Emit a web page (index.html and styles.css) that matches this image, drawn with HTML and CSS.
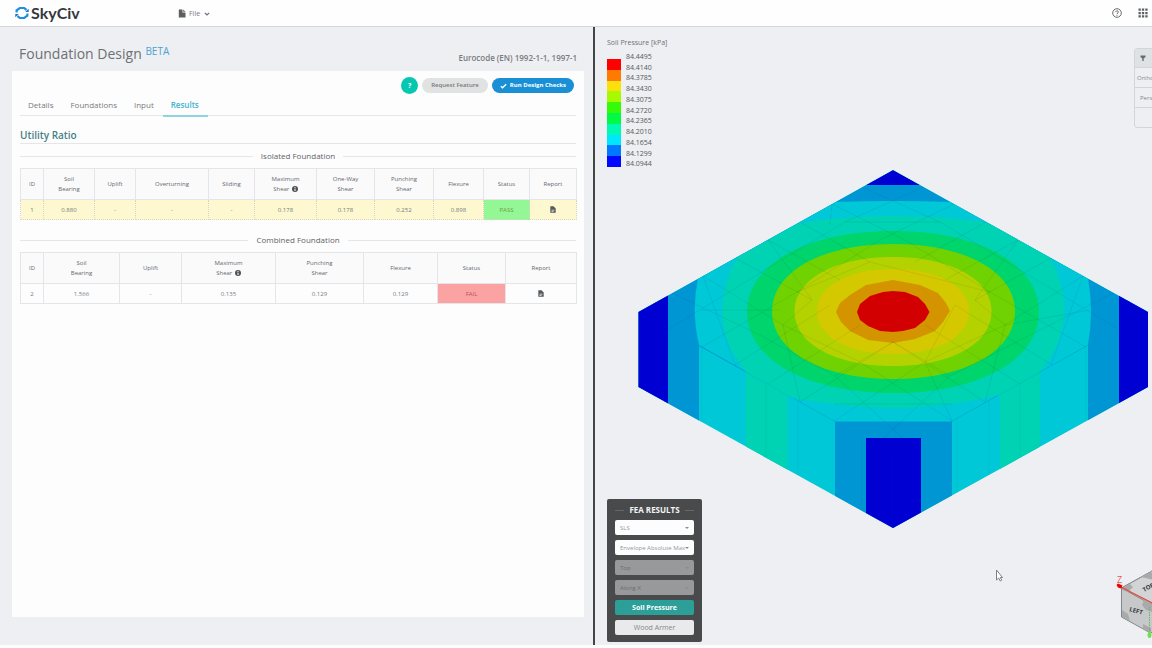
FILE: index.html
```html
<!DOCTYPE html>
<html lang="en">
<head>
<meta charset="utf-8">
<title>SkyCiv Foundation Design</title>
<link rel="stylesheet" href="styles.css">
</head>
<body>
<header class="topbar">
  <a class="brand" href="#">
    <svg class="brand-mark" viewBox="0 0 14 14" aria-hidden="true">
      <g fill="none" stroke-width="2.2">
        <path stroke="#1c8fe0" d="M1.600 6.600V4.400L4.800 2h4.400l2.400 1.800"/>
        <path stroke="#1c8fe0" d="M12.400 7.400v2.200L9.200 12H4.800L2.400 10.200"/>
      </g>
      <path fill="#1670c4" d="M10.200 6h3.500V2.800zM3.800 8H.3v3.200z"/>
    </svg>
    <span>SkyCiv</span>
  </a>
  <button class="file-menu" type="button">
    <svg class="icon-doc" viewBox="0 0 8 9" aria-hidden="true"><path d="M.8.5h3.700v3h3v5H.8zM5.200.5l2.300 2.300H5.200z"/></svg>
    <span>File</span>
    <svg class="icon-chevron" viewBox="0 0 6 4" aria-hidden="true"><path d="M.8.8 3 3 5.200.8"/></svg>
  </button>
  <div class="topbar-tools">
    <button type="button" class="tool" aria-label="Help">
      <svg viewBox="0 0 10 10" aria-hidden="true"><circle cx="5" cy="5" r="4.300" fill="none" stroke="#666b6e"/><path d="M3.700 4.100C3.700 2.300 6.400 2.400 6.400 4 6.400 5 5 5 5 6.100M5 6.900v.9" fill="none" stroke="#666b6e"/></svg>
    </button>
    <button type="button" class="tool" aria-label="Apps">
      <svg viewBox="0 0 10 10" aria-hidden="true"><path fill="#5b5f62" d="M.5.5h2.300v2.300H.5zM3.900.5h2.300v2.300H3.900zM7.300.5h2.300v2.300H7.300zM.5 3.900h2.300v2.300H.5zM3.900 3.900h2.300v2.300H3.900zM7.300 3.900h2.300v2.300H7.300zM.5 7.300h2.300v2.300H.5zM3.900 7.300h2.300v2.300H3.900zM7.300 7.300h2.300v2.300H7.300z"/></svg>
    </button>
  </div>
</header>

<main class="workspace">
  <section class="design">
    <div class="design-head">
      <h1>Foundation Design <sup>BETA</sup></h1>
      <span class="code">Eurocode (EN) 1992-1-1, 1997-1</span>
    </div>
    <div class="card">
      <div class="actions">
        <button type="button" class="btn-help">?</button>
        <button type="button" class="btn btn-grey">Request Feature</button>
        <button type="button" class="btn btn-blue">
          <svg viewBox="0 0 8 6" aria-hidden="true"><path d="M1 3.200 2.900 5 7 1"/></svg>
          <span>Run Design Checks</span>
        </button>
      </div>
      <nav class="tabs">
        <a href="#">Details</a>
        <a href="#">Foundations</a>
        <a href="#">Input</a>
        <a href="#" class="active">Results</a>
      </nav>
      <h2>Utility Ratio</h2>

      <h3 class="rule">Isolated Foundation</h3>
      <table class="ratios">
        <colgroup><col class="w23"><col class="w51"><col class="w41"><col class="w73"><col class="w46"><col class="w62"><col class="w58"><col class="w59"><col class="w50"><col class="w46"><col class="w47"></colgroup>
        <thead>
          <tr><th>ID</th><th>Soil<br>Bearing</th><th>Uplift</th><th>Overturning</th><th>Sliding</th><th>Maximum<br>Shear <svg class="info" viewBox="0 0 6 6" aria-hidden="true"><circle cx="3" cy="3" r="3"/><path d="M3 1v1M3 2.600V5"/></svg></th><th>One-Way<br>Shear</th><th>Punching<br>Shear</th><th>Flexure</th><th>Status</th><th>Report</th></tr>
        </thead>
        <tbody>
          <tr class="selected"><td>1</td><td>0.880</td><td>-</td><td>-</td><td>-</td><td>0.178</td><td>0.178</td><td>0.252</td><td>0.898</td><td class="pass">PASS</td><td><button type="button" class="report" aria-label="Report"><svg viewBox="0 0 6 7" aria-hidden="true"><path fill="#555a5d" d="M.3.300h3.200L5.700 2.500v4.200H.3z"/><path stroke="#fff" stroke-width=".7" d="M1.500 4.200h3M1.500 5.500h2"/></svg></button></td></tr>
        </tbody>
      </table>

      <h3 class="rule">Combined Foundation</h3>
      <table class="ratios">
        <colgroup><col class="w23"><col class="w76"><col class="w62"><col class="w94"><col class="w88"><col class="w74"><col class="w68"><col class="w71"></colgroup>
        <thead>
          <tr><th>ID</th><th>Soil<br>Bearing</th><th>Uplift</th><th>Maximum<br>Shear <svg class="info" viewBox="0 0 6 6" aria-hidden="true"><circle cx="3" cy="3" r="3"/><path d="M3 1v1M3 2.600V5"/></svg></th><th>Punching<br>Shear</th><th>Flexure</th><th>Status</th><th>Report</th></tr>
        </thead>
        <tbody>
          <tr><td>2</td><td>1.566</td><td>-</td><td>0.135</td><td>0.129</td><td>0.129</td><td class="fail">FAIL</td><td><button type="button" class="report" aria-label="Report"><svg viewBox="0 0 6 7" aria-hidden="true"><path fill="#555a5d" d="M.3.300h3.200L5.700 2.500v4.200H.3z"/><path stroke="#fff" stroke-width=".7" d="M1.500 4.200h3M1.500 5.500h2"/></svg></button></td></tr>
        </tbody>
      </table>
    </div>
  </section>

  <section class="viewer">
    <svg class="model" viewBox="595 27 557 618" role="img" aria-label="Soil pressure contour">
      <defs>
        <clipPath id="top-face"><path d="M893 170 1148 312 893 454 638 312z"/></clipPath>
        <clipPath id="body"><path d="M893 170 1148 312V387L893 528 638.500 387V312z"/></clipPath>
        <path id="ring" d="M-1 0C-1-.59-.59-1 0-1S1-.59 1 0 .59 1 0 1-1 .59-1 0Z"/>
      </defs>
      <g clip-path="url(#body)">
        <path fill="#00c8d6" d="M638 170h510v360H638z"/>
        <path fill="#00d2b4" d="M746 360h41.500v160H746zM1000 360h40v160h-40z"/>
        <path fill="#0096d4" d="M638 300h61v140h-61zM1088 300h60v140h-60zM835 421h117v110H835z"/>
        <g clip-path="url(#top-face)">
          <path fill="#0096d4" d="M638 170h510v284H638z"/>
          <path fill="#00c8d6" d="M835 202Q893 200 952 202L1088 278Q1094 312 1088 345L951 421.500H835L699 345Q691 312 698 278z"/>
          <path fill="#00d2b4" d="M798 224Q838 216 893 216T988 223L1050 257Q1066 290 1064 312 1063 345 1040 372L1000 395Q940 408 893 408 840 407 787.500 397L746 372Q723 345 722 312 723 280 738 257z"/>
          <path fill="#0000d2" d="M830 165h126v20H830zM866 438h55v20h-55z"/>
        </g>
        <path fill="#0000d2" d="M638 290h30v130h-30zM1119 290h30v130h-30zM866 438h55v95h-55z"/>
        <use href="#ring" fill="#00d46c" transform="translate(893 312) scale(146 81)"/>
        <use href="#ring" fill="#70d200" transform="translate(893.500 311.500) scale(121.500 67.500)"/>
        <use href="#ring" fill="#b4d200" transform="translate(893 311.500) scale(98.500 54.500)"/>
        <use href="#ring" fill="#d4c800" transform="translate(893 311.500) scale(76 42.500)"/>
        <path fill="#d49400" d="M836 312 840 303 850 295 866 285 893 280 920 285 938 293 946 303 950 311 943 322 935 331 915 339 893 343 868 340 850 331 841 322z"/>
        <path fill="#d20000" d="M857 312 860 304 870 296 883 292 893 291 905 292 918 297 925 304 929.500 312 925 320 915 328 903 331 893 332 880 331 868 326 860 320z"/>
        <g class="mesh" clip-path="url(#top-face)">
          <path d="M672 293 760 335 835 376 910 445M703 276 783 325 860 362 952 421M735 258 812 300M893 342 985 402M768 240 840 280M925 325 1020 384M800 222 870 262M955 305 1052 365M832 204 905 240 990 292 1086 347M862 187 940 222 1020 270 1120 330"/>
          <path d="M1114 293 1030 335 950 376 876 445M1083 276 1005 325 925 362 834 421M1051 258 975 300M893 342 800 402M1018 240 945 280M860 325 768 384M986 222 915 262M830 305 735 365M954 204 880 240 797 292 702 347M924 187 845 222 765 270 667 330"/>
          <path d="M703 276 735 365M768 240 812 300 783 325 800 402M832 204 830 225M797 292 870 262 990 292M835 376 893 342 950 376M955 305 925 362 952 421M1018 240 975 300 1005 325 985 402M1083 276 1051 365M700 310H780M1005 325 1090 310M845 222 940 222M834 404H952"/>
        </g>
        <path class="side-mesh" d="M702 347v76M766 383v75M798 401v75M862 437v74M893 454v74M957 418v75M989 400v75M1020 383v74M1086 347v74"/>
      </g>
      <path fill="#fff" stroke="#7d8083" d="M996.500 570v10l2.200-2 1.500 3 1.500-.800-1.400-2.700h2.200z"/>
      <g>
        <path fill="#c7c8ca" stroke="#85888a" d="M1121.500 588v29l29 16 4-2v-62l-5 3.500z"/>
        <path fill="#d3d4d5" stroke="#85888a" d="M1121.500 588l28-15.500 6 3v29l-6-1z"/>
        <path fill="#a8aaab" d="M1122 588l8-4 3 3-5 5-6-2zM1122 610l6 4 2 7-8-4zM1144 600l9 4v8l-7-2-4-5zM1143 624l8 4v5l-8-4zM1141 577l8-4h5v7z"/>
        <path stroke="#de4939" stroke-width="1.400" d="M1120 586.500 1152 603"/>
        <path fill="#e00" d="M1116.500 585l1.500-1.500 4.500 2-1.500 3-3-1z"/>
        <path stroke="#65bd58" stroke-dasharray="1.500 1" d="M1149.500 607v24"/>
        <ellipse cx="1149.500" cy="635" rx="2" ry="3" fill="#6ee052"/>
        <text class="axis" x="1117" y="583">Z</text>
        <text class="face" transform="translate(1129 611) rotate(16)">LEFT</text>
        <text class="face" transform="translate(1144 592) rotate(-28)">TOP</text>
      </g>
    </svg>

    <div class="legend">
      <p>Soil Pressure [kPa]</p>
      <div class="legend-body">
        <div class="scale"><i class="c1"></i><i class="c2"></i><i class="c3"></i><i class="c4"></i><i class="c5"></i><i class="c6"></i><i class="c7"></i><i class="c8"></i><i class="c9"></i><i class="c10"></i></div>
        <ul>
          <li>84.4495</li><li>84.4140</li><li>84.3785</li><li>84.3430</li><li>84.3075</li><li>84.2720</li><li>84.2365</li><li>84.2010</li><li>84.1654</li><li>84.1299</li><li>84.0944</li>
        </ul>
      </div>
    </div>

    <div class="view-menu">
      <button type="button" class="view-head" aria-label="Collapse"><svg viewBox="0 0 6 6" aria-hidden="true"><path fill="#666b6e" d="M.5.500h5v1.500L3.700 3.500V6H2.300V3.500L.5 2z"/></svg></button>
      <button type="button">Ortho</button>
      <button type="button" class="indent">Persp</button>
      <button type="button" aria-label="More"></button>
    </div>

    <form class="fea">
      <h4 class="rule">FEA RESULTS</h4>
      <div class="pick"><select aria-label="Limit state"><option>SLS</option></select></div>
      <div class="pick"><select aria-label="Load case"><option>Envelope Absolute Max</option></select></div>
      <div class="pick off"><select aria-label="Surface" disabled><option>Top</option></select></div>
      <div class="pick off"><select aria-label="Direction" disabled><option>Along X</option></select></div>
      <button type="button" class="teal">Soil Pressure</button>
      <button type="button">Wood Armer</button>
    </form>
  </section>
</main>
</body>
</html>
```

FILE: styles.css
```css
* { box-sizing: border-box; }

body {
  margin: 0;
  height: 100vh;
  padding-bottom: 3px;
  display: flex;
  flex-direction: column;
  background: #fdfdfd;
  color: #777b7e;
  font: 7px/10px "Open Sans", "Noto Sans", sans-serif;
  overflow: hidden;
}

button, select { font: inherit; color: inherit; border: 0; margin: 0; padding: 0; background: none; }
a { color: inherit; text-decoration: none; }
h1, h2, h3, h4, p, ul { margin: 0; padding: 0; font-weight: 400; list-style: none; }
svg { display: block; }

.topbar {
  flex: none;
  height: 27px;
  display: flex;
  align-items: center;
  padding: 0 4px 0 15px;
  background: #fefefe;
  border-bottom: 1px solid #d5d7d9;
}
.brand { display: flex; align-items: center; gap: 2px; width: 163px; color: #35383b; font: 700 16px/20px Lato, sans-serif; }
.brand-mark { width: 14px; height: 14px; }
.file-menu { display: flex; align-items: center; gap: 3px; font-size: 7px; line-height: 12px; padding-top: 1px; }
.icon-doc { width: 8px; height: 9px; fill: #5b5f62; }
.icon-chevron { width: 6px; height: 4px; margin-left: 1px; fill: none; stroke: #6b6f72; stroke-width: 1.2; }
.topbar-tools { margin-left: auto; display: flex; gap: 16px; }
.tool svg { width: 10px; height: 10px; }

.workspace {
  flex: 1;
  min-height: 0;
  display: grid;
  grid-template-columns: minmax(0, 595fr) minmax(0, 557fr);
  grid-template-rows: minmax(0, 1fr);
  background: #eeeff2;
}

.design {
  display: flex;
  flex-direction: column;
  padding: 0 9px 28px 12px;
  border-right: 2px solid #434547;
}
.design-head { height: 44px; padding: 0 7px; display: flex; justify-content: space-between; }
h1 { padding-top: 17px; font-size: 14px; line-height: 20px; font-weight: 500; color: #6c7173; }
h1 sup { font-size: 10px; line-height: 10px; vertical-align: 4px; color: #4aa3d3; }
.code { padding-top: 25px; font-size: 8px; line-height: 12px; font-weight: 600; }

.card { flex: 1; padding: 6px 8px; background: #fdfdfd; }
.actions { display: flex; justify-content: flex-end; align-items: center; gap: 4px; padding-right: 2px; height: 17px; }
.btn-help { width: 17px; height: 17px; border-radius: 50%; background: #06c8b0; color: #fff; font-weight: 700; }
.btn { height: 15px; padding: 0 8px; border-radius: 8px; display: flex; align-items: center; gap: 3px; font-size: 6px; line-height: 15px; font-weight: 600; }
.btn-grey { padding: 0 9px; background: #e1e2e2; }
.btn-blue { background: #1990d6; color: #fff; font-weight: 700; }
.btn svg { width: 7px; height: 6px; fill: none; stroke: #fff; stroke-width: 1.6; }

.tabs { display: flex; height: 22px; border-bottom: 1px solid #e6e7e9; margin-bottom: 12px; }
.tabs a { padding: 5px 9px 0 8px; font-size: 8px; line-height: 12px; height: 23px; }
.tabs .active { color: #3fb5cf; font-weight: 600; border-bottom: 2px solid #8fd2e0; }

h2 { height: 16px; border-bottom: 1px solid #e4e6e8; color: #468085; font-size: 10px; line-height: 14px; font-weight: 600; }

.rule { display: flex; align-items: center; gap: 8px; }
.rule::before, .rule::after { content: ""; flex: 1; border-top: 1px solid #e4e6e8; }
h3.rule { font-size: 8px; line-height: 12px; padding: 6px 0; color: #5f6366; }

.ratios { width: 100%; table-layout: fixed; border-collapse: collapse; text-align: center; font-size: 6px; line-height: 10px; margin-bottom: 8px; }
.ratios th, .ratios td { padding: 0; border: 1px solid #e3e5e8; }
.ratios th { height: 31px; font-weight: 500; color: #65696c; background: #fafafb; }
.ratios td { height: 20px; }
.ratios .selected td { background: #fdf8cf; border-style: dotted; border-color: #d9d7c4; }
.ratios .selected td.pass { background: #93f795; color: #6f9c3e; }
.ratios td.fail { background: #fba3a3; color: #bb5054; }
.ratios .info { display: inline-block; width: 6px; height: 6px; margin-left: 1px; vertical-align: -1px; fill: #4d5255; stroke: #fff; stroke-width: 0; }
.info path { stroke-width: 1; }
.report { vertical-align: middle; }
.report svg { width: 6px; height: 7px; }
.w23 { width: 23px; } .w41 { width: 41px; } .w46 { width: 46px; } .w47 { width: 47px; }
.w50 { width: 50px; } .w51 { width: 51px; } .w58 { width: 58px; } .w59 { width: 59px; }
.w62 { width: 62px; } .w68 { width: 68px; } .w71 { width: 71px; } .w73 { width: 73px; }
.w74 { width: 74px; } .w76 { width: 76px; } .w88 { width: 88px; } .w94 { width: 94px; }

.viewer { position: relative; overflow: hidden; }
.model { width: 100%; height: 100%; }
.mesh { fill: none; stroke: #124; stroke-opacity: .09; stroke-width: .8; }
.side-mesh { fill: none; stroke: #046; stroke-opacity: .08; stroke-width: .8; }
.axis { fill: #e55; font: 9px "Open Sans", sans-serif; }
.face { fill: #35383b; font: 700 6px "Open Sans", sans-serif; }

.legend { position: absolute; left: 12px; top: 11px; color: #6c7073; }
.legend-body { display: flex; gap: 5px; padding-top: 4px; line-height: 10px; }
.legend-body ul { display: grid; grid-template-rows: repeat(11, 1fr); height: 118px; color: #55595c; }
.scale { width: 14px; height: 108px; margin-top: 7px; display: grid; grid-template-rows: repeat(10, 1fr); }
.c1 { background: #f00; } .c2 { background: #ff7a00; } .c3 { background: #fae00c; }
.c4 { background: #a8fa00; } .c5 { background: #35fa08; } .c6 { background: #00fa46; }
.c7 { background: #00fab4; } .c8 { background: #00e6ff; } .c9 { background: #0078ff; } .c10 { background: #0008ff; }

.view-menu { position: absolute; right: -16px; top: 21px; width: 34px; border: 1px solid #d3d6d9; border-radius: 3px; color: #85898c; font-size: 6px; }
.view-menu button { display: block; width: 100%; height: 18px; padding-left: 2px; text-align: left; }
.view-menu button + button { border-top: 1px solid #d3d6d9; height: 20px; }
.view-menu .view-head { background: #dfe2e4; padding-left: 5px; }
.view-menu button.indent { padding-left: 5px; }
.view-head svg { width: 6px; height: 6px; }

.fea { position: absolute; left: 12px; bottom: 3px; width: 95px; padding: 4px 8px 7px; display: grid; gap: 5px; background: #484a4c; border-radius: 2px; }
.fea h4 { color: #f4f4f4; font-size: 8px; line-height: 14px; font-weight: 700; gap: 5px; margin-bottom: -2px; }
.fea .rule::before, .fea .rule::after { border-color: #65686a; }
.pick { position: relative; }
.pick::after { content: ""; position: absolute; right: 5px; top: 7px; border: 2px solid transparent; border-top-color: #8a8d90; }
.pick select { display: block; width: 100%; height: 15px; padding: 0 8px 0 5px; appearance: none; background: #fdfdfd; border-radius: 2px; color: #94989b; font-size: 6px; }
.pick.off select { background: #97999a; color: #6c6f71; opacity: 1; }
.fea button { height: 15px; border-radius: 2px; background: #e9eaeb; color: #85898b; }
.fea .teal { background: #2b9f98; color: #fff; font-weight: 700; }
```
